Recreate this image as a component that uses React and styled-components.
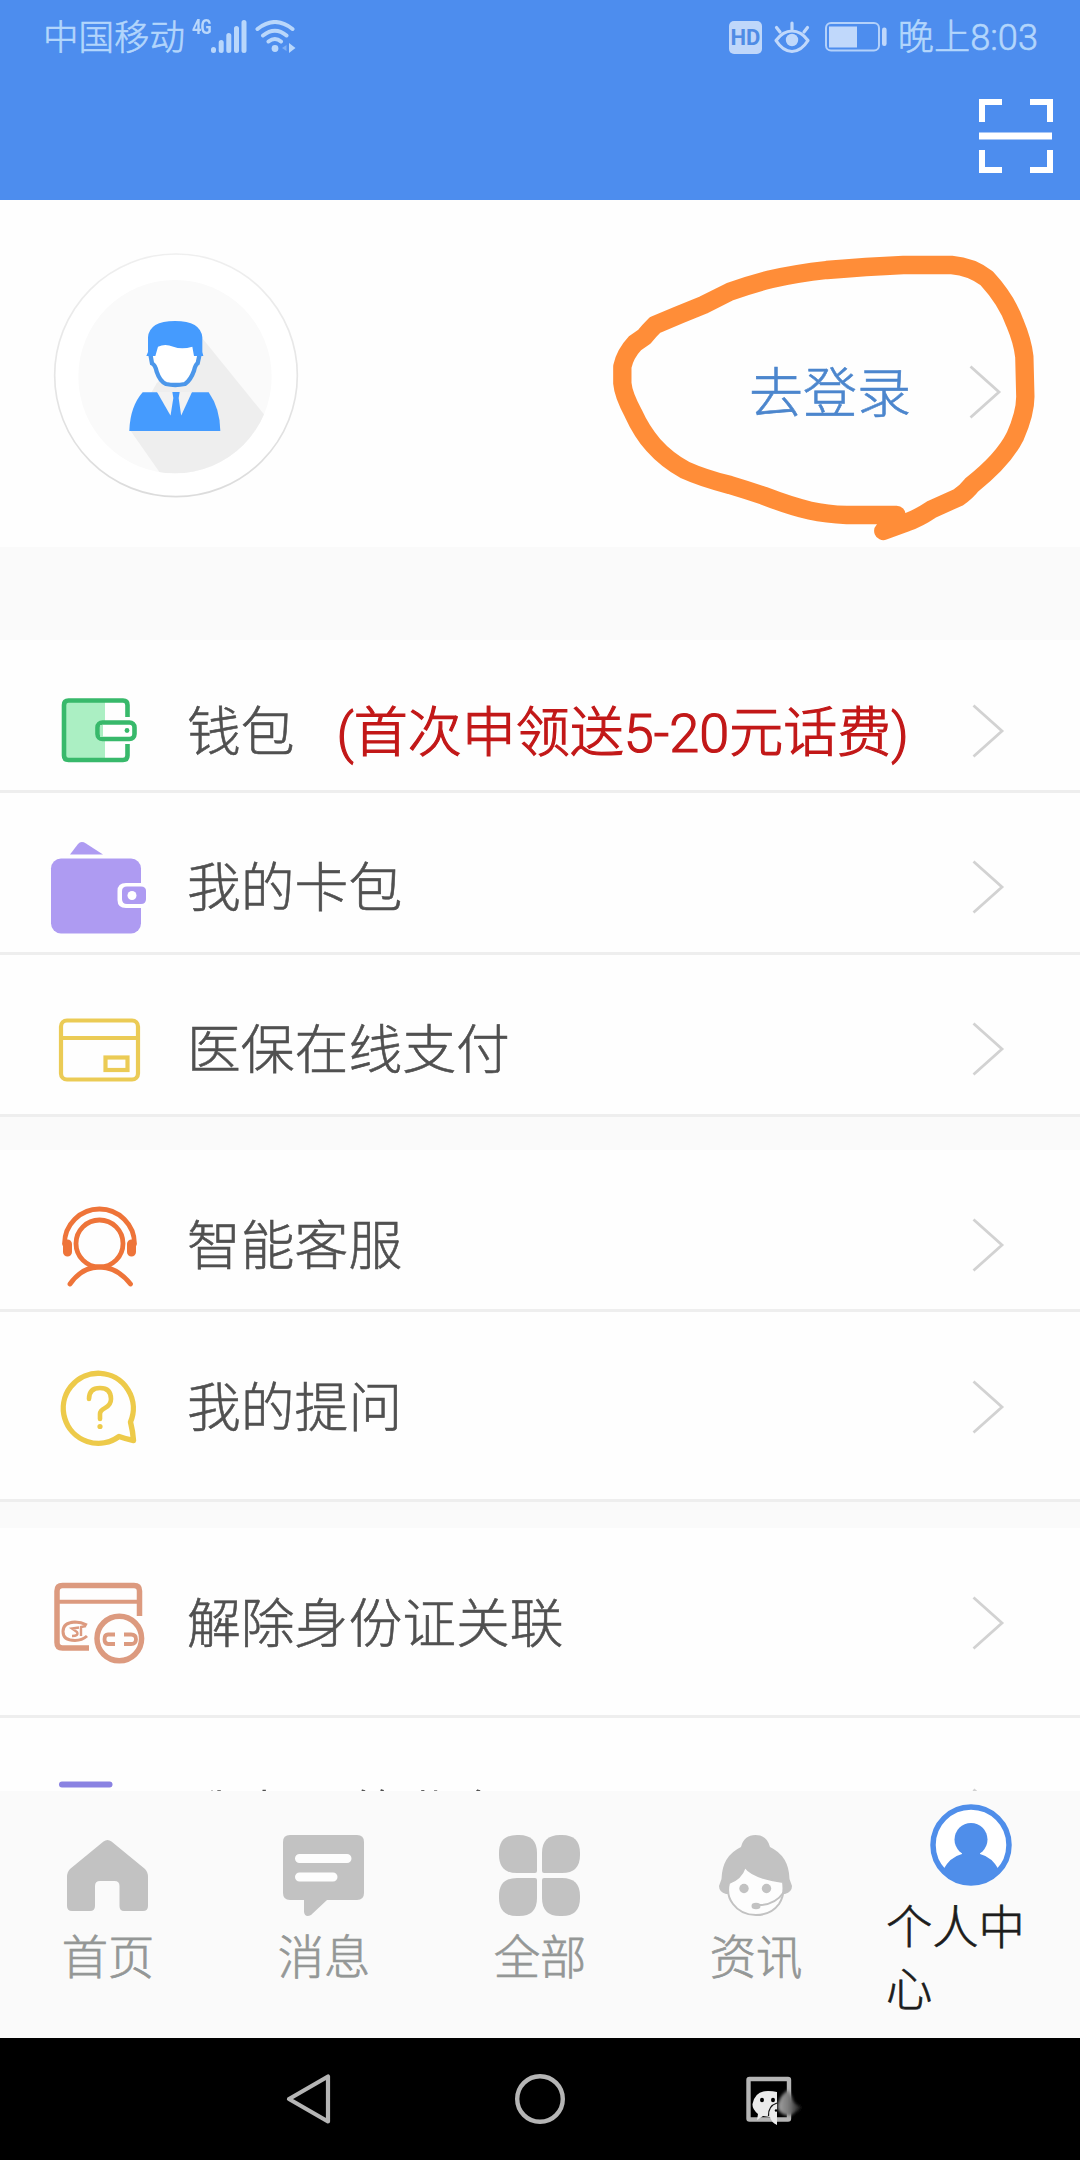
import React from "react";
import styled, { createGlobalStyle } from "styled-components";

const ScanIcon = () => (
  <svg width="76" height="76" viewBox="0 0 76 76" fill="none" stroke="#fff" strokeWidth="6">
    <path d="M4 24V4H24M52 4H72V24M4 52V72H24M52 72H72V52" />
    <path d="M1 38H74" strokeWidth="7" />
  </svg>
);

const SignalIcon = () => (
  <svg width="36" height="34" viewBox="0 0 36 34" fill="none" stroke="#b9d7fb" strokeWidth="5" strokeLinecap="round">
    <path d="M2.500 29.500V30.500M10.200 22.500V30.500M17.800 15.500V30.500M25.500 8.500V30.500M33 2.500V30.500" />
  </svg>
);

const WifiIcon = () => (
  <svg width="41" height="34" viewBox="0 0 41 34" fill="none" stroke="#b9d7fb" strokeWidth="4" strokeLinecap="round">
    <path d="M2.500 9Q20 -5 37.500 9M8 15.500Q20 6 31.500 15.500M13.500 21.500Q20 16.500 26 21.500" />
    <circle cx="20" cy="28.500" r="3.400" fill="#b9d7fb" stroke="none" />
    <path d="M34 23L40.500 28L34 33Z" fill="#b9d7fb" stroke="none" />
    <path d="M31.500 25V31L27 28Z" fill="#7fb0f5" stroke="none" />
  </svg>
);

const EyeIcon = () => (
  <svg width="36" height="33" viewBox="0 0 36 33" fill="none" stroke="#c0d8fb" strokeWidth="3.200" strokeLinecap="round">
    <path d="M2 19.500Q9 10 18 10T34 19.500Q27 30.500 18 30.500T2 19.500Z" strokeLinejoin="round" />
    <circle cx="18" cy="19" r="6.200" fill="#c0d8fb" stroke="none" />
    <path d="M18 2V8M2.500 6.500L6 11M33.500 6.500L30 11" />
  </svg>
);

const BatteryIcon = () => (
  <svg width="64" height="30" viewBox="0 0 64 30">
    <rect x="1" y="1" width="53" height="27.500" rx="5" fill="none" stroke="#b3d1fa" strokeWidth="2" />
    <rect x="4" y="4.500" width="28" height="21" fill="#c0d8fb" />
    <rect x="57" y="5.500" width="4.600" height="18.500" rx="2.200" fill="#c0d8fb" />
  </svg>
);

const AvatarIcon = () => (
  <svg width="250" height="250" viewBox="63 60 750 750">
    <defs>
      <linearGradient id="ring" x1="0" y1="0" x2="0" y2="1">
        <stop offset="0" stopColor="#efefef" />
        <stop offset="1" stopColor="#dcdcdc" />
      </linearGradient>
      <clipPath id="disc">
        <circle cx="435" cy="440" r="290" />
      </clipPath>
    </defs>
    <circle cx="438" cy="436" r="364" fill="#fff" stroke="url(#ring)" strokeWidth="5" />
    <circle cx="435" cy="440" r="290" fill="#fafafa" />
    <path d="M517 325L760 625L640 760H412L300 600L380 460Z" fill="#eeeeee" clipPath="url(#disc)" />
    <path
      d="M361 372L366 400Q376 405 380 425Q390 455 408 462Q435 468 465 462Q482 450 492 422Q496 405 503 400L509 372L500 320H370Z"
      fill="#fff"
      stroke="#4c97ea"
      strokeWidth="13"
    />
    <path
      d="M349 378L354 366V322Q358 273 435 273T517 322V366L520 378H492L487 350Q455 360 430 350Q405 340 384 350L376 378Z"
      fill="#459bfe"
    />
    <path d="M338 487H536Q570 535 571 603H298Q300 530 338 487Z" fill="#459bfe" />
    <path d="M381 486H486L454 556L421 556Z" fill="#f2f2f2" />
    <path d="M427 486H449L446 504L454 560H421L430 504Z" fill="#459bfe" />
  </svg>
);

const ChevronIcon = () => (
  <svg width="34" height="56" viewBox="0 0 34 56" fill="none" stroke="#d2d2d2" strokeWidth="2.800">
    <path d="M2.500 2.500L31 28L2.500 53.500" />
  </svg>
);

const WalletIcon = () => (
  <RowSvg stroke="#38b96b" strokeWidth="4.600">
    <path d="M14 20H55V79H14Z" fill="#abefc3" stroke="none" />
    <path d="M77.500 36V24Q77.500 19.500 73 19.500H18.500Q14 19.500 14 24V74.500Q14 79 18.500 79H73Q77.500 79 77.500 74.500V63" />
    <rect x="47.500" y="41.500" width="37" height="16.500" rx="5" fill="#fff" />
    <path d="M51.500 44V56" strokeWidth="3" stroke="#abefc3" />
    <circle cx="77" cy="49.500" r="2.400" fill="#38b96b" stroke="none" />
  </RowSvg>
);

const CardBagIcon = () => (
  <RowSvg fill="#ae9bf2">
    <path d="M20 17.500L28 7Q31 3.500 36 6.500L53 17.500Z" />
    <rect x="1" y="21.500" width="90" height="75" rx="10" />
    <path d="M98 46H76Q67.500 46 67.500 54V63Q67.500 71 76 71H98Z" fill="#fff" />
    <path d="M77 49.500H91Q96 49.500 96 54V62Q96 67 91 67H77Q72 67 72 62V54Q72 49.500 77 49.500Z" />
    <circle cx="82" cy="58.500" r="4.500" fill="#fff" />
  </RowSvg>
);

const PayCardIcon = () => (
  <RowSvg stroke="#ebcb55" strokeWidth="4.200">
    <rect x="11" y="21.500" width="77" height="59" rx="6" />
    <path d="M11 39H88" />
    <rect x="55.500" y="58.500" width="22" height="12.500" />
  </RowSvg>
);

const ServiceIcon = () => (
  <RowSvg stroke="#ee7439" strokeWidth="4.800" strokeLinecap="round">
    <circle cx="49.500" cy="48.500" r="23.500" />
    <path d="M14.500 49A35 35 0 0 1 84.500 49" />
    <path d="M17.500 49V57M81.500 49V57" strokeWidth="9" />
    <path d="M20 89Q32 72 49.500 72T80.500 89" />
  </RowSvg>
);

const QuestionIcon = () => (
  <RowSvg stroke="#edca4a" strokeWidth="5.400" strokeLinejoin="round" strokeLinecap="round">
    <path d="M80.500 65A35 35 0 1 0 69 79.500Q76 82 83.500 83.500Q83 75 80.500 65Z" />
    <path d="M39 42Q39 31 50 31T61 42Q61 48 55 51Q50 53.500 50 57V62" strokeWidth="4.600" />
    <circle cx="50" cy="69.500" r="2.600" fill="#edca4a" stroke="none" />
  </RowSvg>
);

const UnlinkIcon = () => (
  <RowSvg stroke="#dc9a7f" strokeWidth="5.500">
    <path d="M89.500 43V18Q89.500 12.500 84 12.500H12.500Q7 12.500 7 18V69.500Q7 75 12.500 75H39" />
    <path d="M8 28.700H89" strokeWidth="4" />
    <circle cx="69.300" cy="65.500" r="22.300" />
    <path d="M37 52Q31 49 25 49Q13 49.500 13 58.500T25 67.500Q32 67.500 37 63" strokeWidth="3" />
    <path d="M29 54.500L22 55.500L27 59Q29 63 22 63M31 63V54L36 53" strokeWidth="2.400" />
    <path d="M65 61.500H58Q54.500 61.500 54.500 66.200T58 71H65M74 61.500H81Q86 61.500 86 66.200T81 71H74" strokeWidth="3.800" />
  </RowSvg>
);

const BusinessIcon = () => (
  <RowSvg stroke="#8a82e2" strokeWidth="6" strokeLinecap="round">
    <path d="M12 19.500H59.500" />
  </RowSvg>
);

const RowSvg = ({ children, ...rest }) => (
  <svg width="100" height="100" viewBox="0 0 100 100" fill="none" {...rest}>
    {children}
  </svg>
);

const HomeIcon = () => (
  <svg width="81" height="81" viewBox="0 0 81 81" fill="#c2c2c2">
    <path d="M36.500 6.500Q40.500 3.500 44.500 6.500L78 34Q81 37 81 42V71Q81 76 76 76H57Q52.500 76 52.500 71V51Q52.500 46 47.500 46H33Q28 46 28 51V71Q28 76 23 76H5Q0 76 0 71V42Q0 37 3 34Z" />
  </svg>
);

const MessageIcon = () => (
  <svg width="81" height="81" viewBox="0 0 81 81" fill="#c2c2c2">
    <path d="M7 0H74Q81 0 81 7V58Q81 65 74 65H44L28 80Q22 83 21 77V65H7Q0 65 0 58V7Q0 0 7 0Z" />
    <path d="M16.500 23.500H64M16.500 42H50" stroke="#fdfdfd" strokeWidth="9" strokeLinecap="round" />
  </svg>
);

const AllIcon = () => (
  <svg width="81" height="81" viewBox="0 0 81 81" fill="#c2c2c2">
    <path d="M18 0H20Q38 0 38 18V36Q38 38 36 38H18Q0 38 0 20V18Q0 0 18 0Z" />
    <path d="M61 0H63Q81 0 81 18V20Q81 38 63 38H45Q43 38 43 36V18Q43 0 61 0Z" />
    <path d="M18 43H36Q38 43 38 45V63Q38 81 20 81H18Q0 81 0 63V61Q0 43 18 43Z" />
    <path d="M45 43H63Q81 43 81 61V63Q81 81 63 81H61Q43 81 43 63V45Q43 43 45 43Z" />
  </svg>
);

const NewsIcon = () => (
  <svg width="81" height="81" viewBox="0 0 81 81" fill="#c2c2c2">
    <path d="M26 12Q29 0 40.500 0T55 12Q74 21 74.500 44L77 51Q77 57 70 59H11Q4 57 4 51L6.500 44Q7 21 26 12Z" />
    <path d="M30 32Q38 43 68 47Q70 60 64 69Q56 80 41 80T18 69Q11 60 14 48Q26 44 30 32Z" fill="#fdfdfd" stroke="#c2c2c2" strokeWidth="2" />
    <circle cx="29" cy="53.500" r="4.700" />
    <circle cx="51.500" cy="53.500" r="4.700" />
    <ellipse cx="41" cy="71" rx="4.500" ry="3.200" />
    <path d="M44 70Q60 70 69 57" fill="none" stroke="#c2c2c2" strokeWidth="2" />
  </svg>
);

const UserIcon = () => (
  <svg width="82" height="82" viewBox="0 0 82 82">
    <defs>
      <clipPath id="userDisc">
        <circle cx="41" cy="41" r="40" />
      </clipPath>
    </defs>
    <circle cx="41" cy="41" r="38" fill="#fff" stroke="#4f8eea" strokeWidth="5.500" />
    <g fill="#4f8eea" clipPath="url(#userDisc)">
      <ellipse cx="41" cy="35.500" rx="16.500" ry="16.500" />
      <path d="M32 46H50V50Q62 53 69 66L60 82H22L13 66Q20 53 32 50Z" />
    </g>
  </svg>
);

const BackIcon = () => (
  <svg width="52" height="52" viewBox="0 0 52 52" fill="none" stroke="#b5b5b5" strokeWidth="4.200" strokeLinejoin="round">
    <path d="M45 3.500V48.500L6 26Z" />
  </svg>
);

const CircleIcon = () => (
  <svg width="52" height="52" viewBox="0 0 52 52" fill="none" stroke="#b5b5b5" strokeWidth="4.400">
    <circle cx="26" cy="26" r="22.800" />
  </svg>
);

const RecentIcon = () => (
  <svg width="70" height="52" viewBox="0 0 70 52">
    <defs>
      <linearGradient id="fade" x1="0" x2="1">
        <stop offset="0" stopColor="#a0a0a0" />
        <stop offset="0.450" stopColor="#777" />
        <stop offset="1" stopColor="#000" />
      </linearGradient>
      <filter id="soft">
        <feGaussianBlur stdDeviation="1.500" />
      </filter>
    </defs>
    <rect x="3.500" y="6" width="40.500" height="40.500" rx="1" fill="none" stroke="#b5b5b5" strokeWidth="4.400" />
    <path d="M33 31Q36 21 43 17L47 24Q48 32 58 34Q50 39 45 43Q36 42 33 36Z" fill="url(#fade)" filter="url(#soft)" />
    <path d="M32 19V52Q26 49 25 44L18 43L12 47L13 41Q7 36 7.500 31Q10 18 23 18Q28 18 32 19Z" fill="#ebebeb" />
    <path d="M32 30Q23 33 23.500 43" fill="none" stroke="#111" strokeWidth="1.300" />
    <ellipse cx="17" cy="27" rx="2" ry="2.200" />
    <ellipse cx="28" cy="27" rx="2" ry="2.200" />
    <circle cx="31" cy="37.500" r="1.200" />
  </svg>
);

const sections = [
  [
    { label: "钱包", note: "(首次申领送5-20元话费)", Icon: WalletIcon, height: 153, top: 41 },
    { label: "我的卡包", Icon: CardBagIcon, height: 162, top: 44 },
    { label: "医保在线支付", Icon: PayCardIcon, height: 162, top: 44 },
  ],
  [
    { label: "智能客服", Icon: ServiceIcon, height: 162, top: 45 },
    { label: "我的提问", Icon: QuestionIcon, height: 190, top: 45 },
  ],
  [
    { label: "解除身份证关联", Icon: UnlinkIcon, height: 190, top: 45 },
    { label: "我办理的业务", Icon: BusinessIcon, height: 190, top: 46.5 },
  ],
];

const gaps = [0, 33, 26];

const tabs = [
  { label: "首页", Icon: HomeIcon },
  { label: "消息", Icon: MessageIcon },
  { label: "全部", Icon: AllIcon },
  { label: "资讯", Icon: NewsIcon },
  { label: "个人中心", Icon: UserIcon, active: true },
];

const App = () => {
  return (
    <Page>
      <GlobalStyle />
      <Header>
        <StatusBar>
          <StatusText>中国移动</StatusText>
          <Network>4G</Network>
          <SignalIcon />
          <WifiIcon />
          <StatusRight>
            <HdBadge>HD</HdBadge>
            <EyeIcon />
            <BatteryIcon />
            <Clock>晚上8:03</Clock>
          </StatusRight>
        </StatusBar>
        <ScanButton>
          <ScanIcon />
        </ScanButton>
      </Header>
      <Profile>
        <AvatarIcon />
        <LoginLink>
          <LoginText>去登录</LoginText>
          <ChevronIcon />
        </LoginLink>
        <Marker viewBox="0 0 1470 990">
          <path d="M920 855H770Q710 853 660 842Q600 828 520 797Q470 780 420 765Q340 745 285 720Q230 690 190 645Q155 605 130 550Q100 495 97 460V410Q105 372 135 340L163 320Q175 305 195 285Q265 255 340 225L420 185Q480 163 540 148Q620 130 710 120Q830 110 940 105H1085Q1145 110 1190 145Q1250 210 1275 280Q1298 335 1303 380L1306 500Q1306 550 1275 620Q1240 690 1145 765Q1130 785 1105 802Q1065 820 1025 838Q985 865 950 877L880 903L920 860" />
        </Marker>
      </Profile>
      <List>
        {sections.map((rows, i) => (
          <Section key={i} $gap={gaps[i]}>
            {rows.map(({ label, note, Icon, height, top }) => (
              <Row key={label} $height={height} $top={top}>
                <Icon />
                <RowLabel>{label}</RowLabel>
                {note && <RowNote>{note}</RowNote>}
                <RowArrow>
                  <ChevronIcon />
                </RowArrow>
              </Row>
            ))}
          </Section>
        ))}
      </List>
      <TabBar>
        {tabs.map(({ label, Icon, active }) => (
          <Tab key={label}>
            <Icon />
            <TabLabel $active={active}>{label}</TabLabel>
          </Tab>
        ))}
      </TabBar>
      <NavBar>
        <BackIcon />
        <CircleIcon />
        <RecentIcon />
      </NavBar>
    </Page>
  );
};

export default App;

const GlobalStyle = createGlobalStyle`
  * {
    box-sizing: border-box;
  }

  body {
    margin: 0;
    background: #fff;
    font-family: Roboto, "Noto Sans CJK SC", sans-serif;
  }

  svg {
    display: block;
    flex-shrink: 0;
  }
`;

const Page = styled.div`
  width: 1080px;
  height: 2160px;
  display: flex;
  flex-direction: column;
  overflow: hidden;
  background: #fafafa;
`;

const Header = styled.header`
  height: 200px;
  flex-shrink: 0;
  background: #4d8dee;
`;

const StatusBar = styled.div`
  height: 74px;
  padding: 0 42px 0 43px;
  display: flex;
  align-items: center;
`;

const StatusText = styled.span`
  padding-top: 2px;
  font-size: 35.5px;
  font-weight: 300;
  line-height: 50px;
  color: #b3d6fc;
  white-space: nowrap;
  -webkit-text-stroke: 0.6px #b3d6fc;
`;

const Clock = styled(StatusText)`
  font-size: 36.2px;
`;

const Network = styled.span`
  width: 19px;
  margin: 0 0 20px 7px;
  font-size: 21px;
  font-weight: 700;
  line-height: 16px;
  letter-spacing: -1px;
  color: #b9d7fb;
  transform: scaleX(0.78);
  transform-origin: left;

  & + svg {
    margin-right: 8px;
  }
`;

const StatusRight = styled.div`
  margin-left: auto;
  display: flex;
  align-items: center;

  svg {
    margin-left: 12px;
  }

  svg + svg {
    margin-left: 15px;
    margin-right: 9px;
  }
`;

const HdBadge = styled.span`
  width: 33px;
  height: 33px;
  border-radius: 5px;
  background: #bfd7fa;
  color: #4f8ce5;
  font-size: 22px;
  font-weight: 700;
  line-height: 33px;
  text-align: center;
`;

const ScanButton = styled.div`
  display: flex;
  justify-content: flex-end;
  padding: 24px 26px 0 0;
`;

const Profile = styled.section`
  position: relative;
  height: 347px;
  flex-shrink: 0;
  padding: 50px 78px 47px 51px;
  display: flex;
  justify-content: space-between;
  background: #fefefe;
`;

const LoginLink = styled.div`
  display: flex;
  align-items: center;
  height: 80px;
  margin-top: 102px;
  gap: 57px;
`;

const LoginText = styled.span`
  padding-top: 6px;
  color: #4c86cd;
  font-size: 54px;
  line-height: 80px;
  font-weight: 300;
  -webkit-text-stroke: 0.6px #4c86cd;
`;

// hand-drawn circle over the login link
const Marker = styled.svg`
  position: absolute;
  left: 590px;
  top: 30px;
  width: 490px;
  height: 330px;

  path {
    fill: none;
    stroke: #ff8d38;
    stroke-width: 55;
    stroke-linecap: round;
    stroke-linejoin: round;
  }
`;

const List = styled.main`
  height: 1151px;
  margin-top: 93px;
  flex-shrink: 0;
  overflow: hidden;
`;

const Section = styled.section`
  margin-top: ${props => props.$gap}px;
  background: #fefefe;
`;

const Row = styled.div`
  height: ${props => props.$height}px;
  padding: ${props => props.$top}px 75px 0 50px;
  display: flex;
  align-items: flex-start;
  border-bottom: 3px solid #eeeeee;
`;

const RowLabel = styled.span`
  margin-left: 37px;
  font-size: 53.8px;
  font-weight: 300;
  line-height: 104px;
  color: #505050;
  white-space: nowrap;
  -webkit-text-stroke: 0.6px #505050;
`;

const RowNote = styled.span`
  margin-left: 42px;
  font-size: 54px;
  font-weight: 300;
  line-height: 105px;
  color: #c21818;
  white-space: nowrap;
  -webkit-text-stroke: 1.2px #c21818;
`;

const RowArrow = styled.div`
  height: 100px;
  margin-left: auto;
  display: flex;
  align-items: center;
`;

const TabBar = styled.nav`
  height: 247px;
  flex-shrink: 0;
  display: grid;
  grid-template-columns: repeat(5, 1fr);
  background: #fafafa;
`;

const Tab = styled.div`
  display: flex;
  flex-direction: column;
  align-items: center;
  justify-content: center;
  padding: 0 22px 6px 20px;
`;

const TabLabel = styled.span`
  padding: 1px 0 0 2px;
  margin: 10px 0 -1px;
  font-size: 46.3px;
  font-weight: 300;
  line-height: 62px;
  color: ${props => (props.$active ? "#1c1c1c" : "#949796")};
  -webkit-text-stroke: 0.7px ${props => (props.$active ? "#1c1c1c" : "#949796")};
`;

const NavBar = styled.footer`
  height: 122px;
  flex-shrink: 0;
  display: flex;
  align-items: center;
  padding: 0 0 0 283px;
  gap: 179px;
  background: #000;
`;
